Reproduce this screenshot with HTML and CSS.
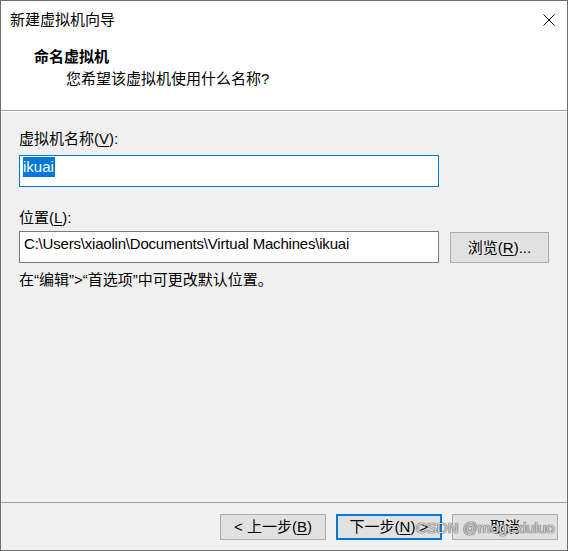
FILE: index.html
```html
<!DOCTYPE html>
<html lang="zh-CN">
  <head>
    <meta charset="UTF-8" />
    <meta name="viewport" content="width=device-width, initial-scale=1.0" />
    <title>新建虚拟机向导</title>
    <link rel="stylesheet" href="styles.css">
  </head>
  <body>
    <div class="window">
      <div class="titlebar">
        <span class="title">新建虚拟机向导</span>
        <svg class="close" width="12" height="12" viewBox="0 0 12 12">
          <path d="M0.5 0.5 L11.5 11.5 M11.5 0.5 L0.5 11.5" stroke="#000" stroke-width="1" fill="none" />
        </svg>
      </div>

      <div class="header">
        <div class="heading">命名虚拟机</div>
        <div class="subheading">您希望该虚拟机使用什么名称?</div>
      </div>

      <div class="content">
        <div class="label">虚拟机名称(<u>V</u>):</div>
        <div class="field focused"><span class="selected">ikuai</span></div>

        <div class="label second">位置(<u>L</u>):</div>
        <div class="row">
          <div class="field">C:\Users\xiaolin\Documents\Virtual Machines\ikuai</div>
          <button class="btn browse">浏览(<u>R</u>)...</button>
        </div>

        <div class="hint">在“编辑”&gt;“首选项”中可更改默认位置。</div>
      </div>

      <div class="footer">
        <button class="btn">&lt; 上一步(<u>B</u>)</button>
        <button class="btn default">下一步(<u>N</u>) &gt;</button>
        <button class="btn">取消</button>
        <span class="watermark">CSDN @mogexiuluo</span>
      </div>
    </div>
  </body>
</html>
```

FILE: styles.css
```css
body {
  margin: 0;
  background: #fff;
  font-family: "Liberation Sans", "Noto Sans CJK SC", sans-serif;
  font-size: 15px;
  color: #000;
}

.window {
  position: relative;
  width: 568px;
  height: 551px;
  box-sizing: border-box;
  border: 1px solid #6f6f6f;
  display: flex;
  flex-direction: column;
  background: #f0f0f0;
}

.titlebar {
  height: 38px;
  background: #fff;
  display: flex;
  align-items: center;
  justify-content: space-between;
  padding: 0 12px 0 9px;
  line-height: 20px;
}

.close {
  display: block;
}

.header {
  height: 72px;
  box-sizing: border-box;
  background: #fff;
  padding: 8px 0 0 33px;
  line-height: 20px;
  border-bottom: 1px solid #a0a0a0;
  box-shadow: 0 1px 0 #fff;
}

.heading {
  font-weight: bold;
}

.subheading {
  padding-left: 32px;
  margin-top: 2px;
}

.content {
  flex: 1;
  padding: 18px 18px 0 18px;
  line-height: 20px;
}

.label {
  margin-bottom: 6px;
}

.label.second {
  margin-top: 21px;
  margin-bottom: 3px;
}

u {
  text-decoration-thickness: 1px;
  text-underline-offset: 2px;
}

.field {
  width: 420px;
  height: 32px;
  box-sizing: border-box;
  border: 1px solid #7a7a7a;
  background: #fff;
  padding: 2px 4px 0 4px;
  white-space: nowrap;
  overflow: hidden;
  letter-spacing: -0.2px;
}

.field.focused {
  border-color: #0078d7;
  padding: 1px 3px 0 3px;
  letter-spacing: 0;
}

.selected {
  display: inline-block;
  background: #0078d7;
  color: #fff;
  padding-right: 1px;
}

.row {
  display: flex;
  gap: 11px;
}

.btn {
  font: inherit;
  line-height: 20px;
  width: 106px;
  height: 26px;
  padding: 0;
  background: #e1e1e1;
  border: 1px solid #adadad;
  color: #000;
}

.browse {
  width: 99px;
  height: 31px;
  margin-top: 1px;
}

.btn.default {
  border: 2px solid #0078d7;
}

.hint {
  margin-top: 7px;
}

.footer {
  position: relative;
  height: 48px;
  box-sizing: border-box;
  border-top: 1px solid #a0a0a0;
  display: flex;
  justify-content: flex-end;
  align-items: flex-start;
  gap: 10px;
  padding: 11px 9px 0 0;
}

.watermark {
  position: absolute;
  left: 415px;
  top: 15px;
  font-family: "Liberation Sans", Arial, sans-serif;
  font-size: 15px;
  line-height: 20px;
  color: rgba(238, 238, 238, 0.85);
  text-shadow: 0 0 1px #555, 0 0 1px #555, 0 0 1px #777;
}
```
